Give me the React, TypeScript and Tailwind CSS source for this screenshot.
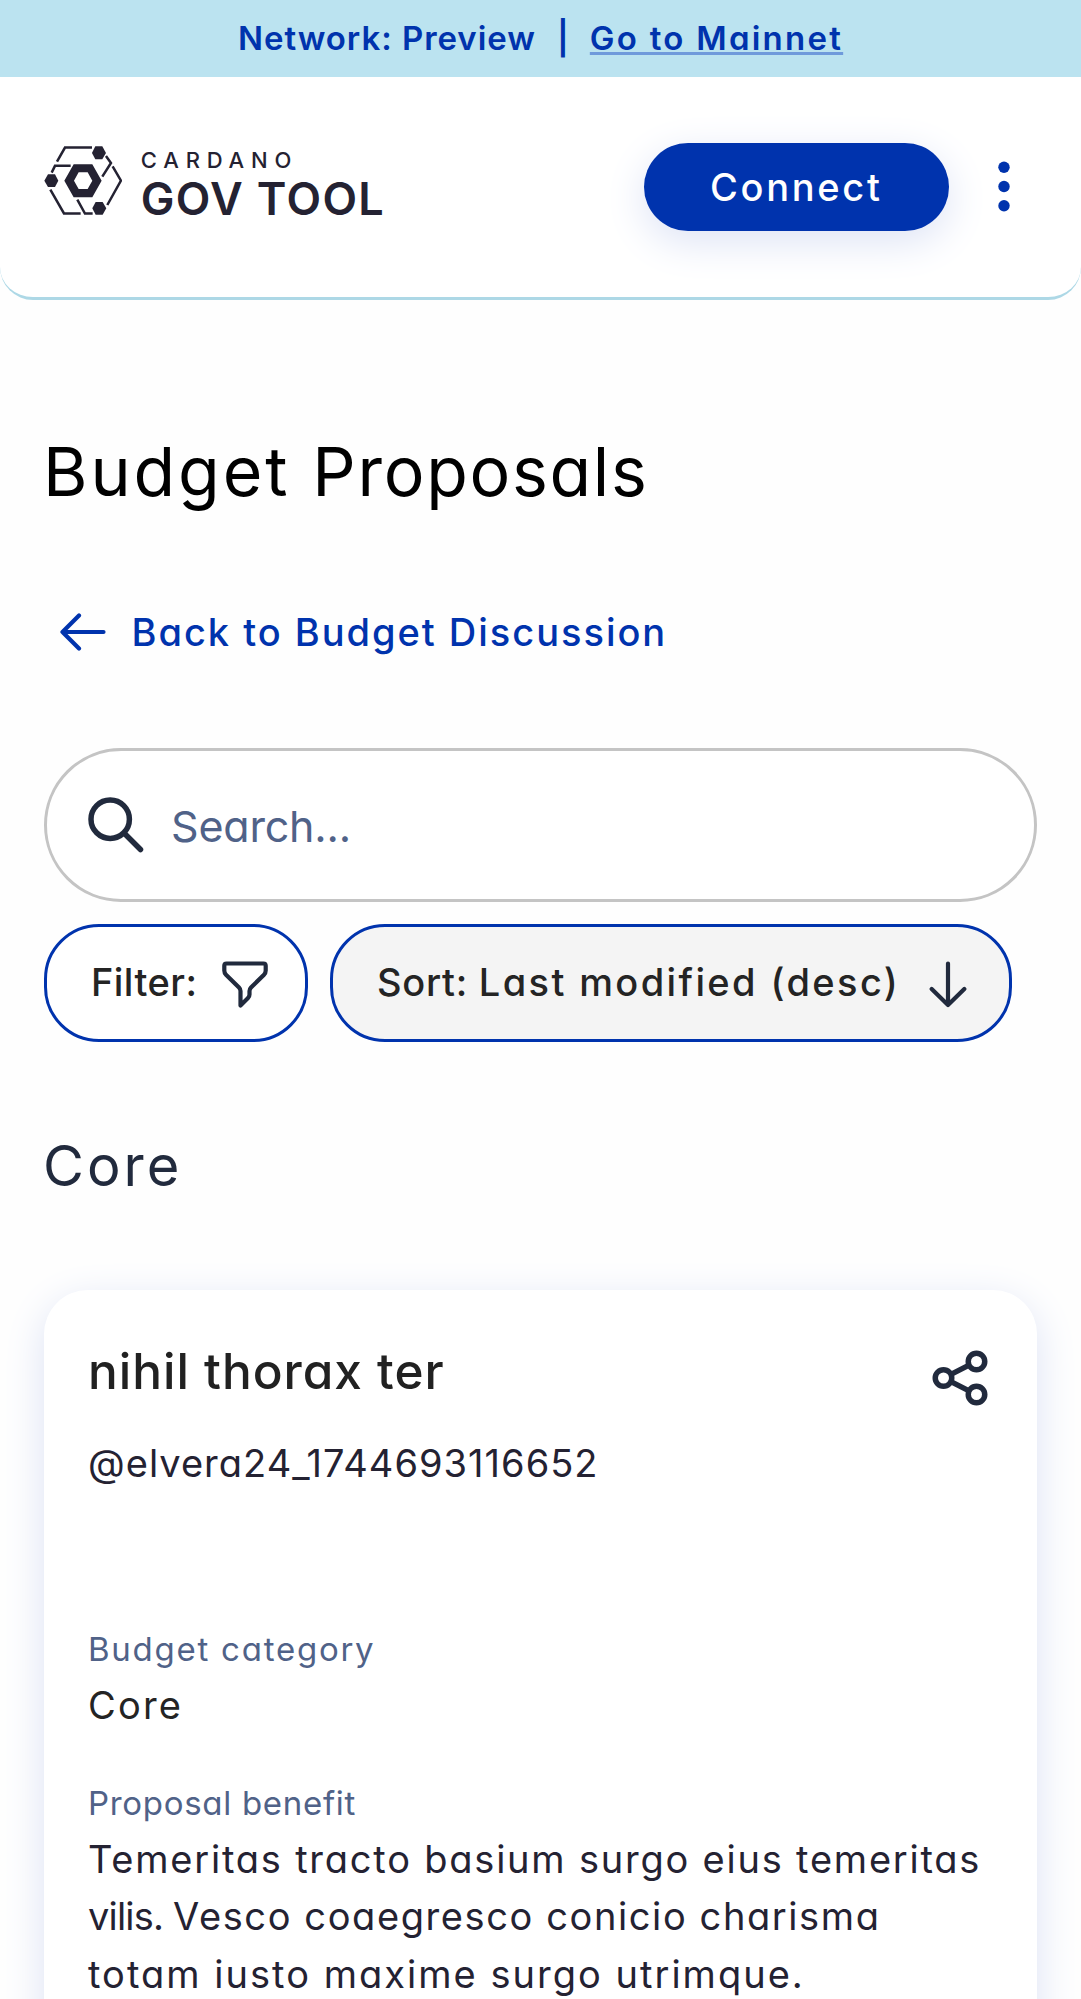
import type { ReactNode } from 'react';

function GovToolMark() {
  return (
    <svg className="h-[69px] w-[78.3px] shrink-0" viewBox="12 16 235 207" fill="none" stroke="#242232" strokeWidth="7.5">
      <path d="M51 63 75 20.5H156" />
      <path d="M35 96 45 75.5H92" />
      <path d="M198 46 213 67 187 108" />
      <path d="M218 77 243 120 202 193" />
      <path d="M31 147 72 218.5H122" />
      <path d="M112 177 135 218.5H158" />
      <g fill="#242232" stroke="none">
        <path d="M156 37 166 17H187L198 37 187 56H166Z" />
        <path d="M13 120 24 101H45L55 120 45 139H24Z" />
        <path d="M157 203 167 184H188L199 203 188 222H167Z" />
        <path fillRule="evenodd" d="M73 120.5 101 71H157L185 120.5 157 169.5H101ZM102 120.5 116 145H143L157 120.5 143 95H116Z" />
      </g>
    </svg>
  );
}

function Field({ label, labelClass, children }: { label: string; labelClass: string; children: ReactNode }) {
  return (
    <div>
      <div className={`text-[33px] leading-[50px] text-[#506288] ${labelClass}`}>{label}</div>
      {children}
    </div>
  );
}

export default function App() {
  return (
    <div className="flex h-[1999px] w-[1081px] flex-col overflow-hidden bg-[#fefefe] font-['Inter',sans-serif] whitespace-nowrap [font-feature-settings:'cv11']">
      <div className="flex h-[77px] shrink-0 bg-[#bbe3f0] pl-[238px] text-[33px] leading-[76px] font-semibold text-[#0033ad]">
        <span className="tracking-[0.95px]">Network: Preview</span>
        <span className="ml-[17px] w-5 text-center">|</span>
        <a className="ml-[17px] tracking-[2.25px] underline decoration-[#6f9adb] decoration-[3px] underline-offset-[2px]">Go to Mainnet</a>
      </div>

      <header className="flex h-[222.5px] shrink-0 items-center justify-between rounded-b-[33px] border-b-[3px] border-[#add8e6] bg-white pr-[71.3px] pl-11">
        <div className="mb-[13px] flex h-[69px] items-start gap-[18.5px] text-[#242232]">
          <GovToolMark />
          <div>
            <div className="text-[22px] leading-[28.4px] font-medium tracking-[6.8px]">CARDANO</div>
            <div className="text-[45px] leading-[49px] font-semibold tracking-[1.35px]">GOV TOOL</div>
          </div>
        </div>
        <div className="flex items-center gap-[48.7px]">
          <button className="h-[88px] w-[305.5px] rounded-full bg-[#0033ad] pt-0.5 text-[38px] font-medium tracking-[2.7px] text-white shadow-[0_11px_41px_#dde3f5]">
            Connect
          </button>
          <svg className="h-[51px] w-3" viewBox="0 0 12 51" fill="#0033ad">
            <circle cx="6" cy="6.2" r="5.7" />
            <circle cx="6" cy="25.5" r="5.7" />
            <circle cx="6" cy="44.8" r="5.7" />
          </svg>
        </div>
      </header>

      <main className="px-11">
        <h1 className="-ml-px mt-[131.5px] text-[68px] leading-[80px] text-black">
          <span className="tracking-[2.9px]">{'Budget '}</span>
          <span className="tracking-[1.7px]">Proposals</span>
        </h1>

        <a className="mt-[92.8px] flex h-14 items-center gap-[26px] pl-[15.5px] text-[38px] font-medium tracking-[1.98px] text-[#0033ad]">
          <svg className="h-[38px] w-[46px]" viewBox="0 0 46 38" fill="none" stroke="#0033ad" strokeWidth="4.2" strokeLinecap="round" strokeLinejoin="round">
            <path d="M43.5 19H2.5M19 2.5 2.5 19 19 35.5" />
          </svg>
          <span className="pt-px">Back to Budget Discussion</span>
        </a>

        <div className="mt-[87.8px] flex h-[154px] items-center gap-[27px] rounded-full border-[3px] border-[#c4c4c4] bg-white pl-[41px] text-[43px]">
          <svg className="size-14" viewBox="0 0 56 56" fill="none" stroke="#212a3d" strokeWidth="5.5" strokeLinecap="round">
            <circle cx="22.2" cy="22.2" r="19.2" />
            <path d="M37 37 52.5 52.5" />
          </svg>
          <span className="pt-[3px] tracking-[-0.2px] text-[#506288]">Search...</span>
        </div>

        <div className="mt-[22px] flex gap-[22px] text-[38px] font-medium text-[#242424]">
          <button className="flex h-[118px] w-[264px] items-center gap-[25px] rounded-[55px] border-[3px] border-[#0033ad] bg-white pl-[44px] tracking-[0.45px]">
            Filter:
            <svg className="mt-[3px] h-[47px] w-[46px] shrink-0" viewBox="0 0 46 47" fill="none" stroke="#212a3d" strokeWidth="4.2" strokeLinejoin="round">
              <path d="M4.5 2.5H41.5Q43.7 2.5 43.7 4.7V9.5Q43.7 12 42 13.7L29 26.5Q27.5 28 27.5 30V33.5Q27.5 35.5 26 37L18.5 44.5V30Q18.5 28 17 26.5L4 13.7Q2.3 12 2.3 9.5V4.7Q2.3 2.5 4.5 2.5Z" />
            </svg>
          </button>
          <button className="flex h-[118px] w-[682px] items-center gap-[29px] rounded-[55px] border-[3px] border-[#0033ad] bg-[#f4f4f4] pl-[44px]">
            <span className="whitespace-pre">
              <span className="tracking-[0.73px]">{'Sort: '}</span>
              <span className="tracking-[2.38px]">Last modified (desc)</span>
            </span>
            <svg className="mt-[3px] h-[47px] w-[38px] shrink-0" viewBox="0 0 38 47" fill="none" stroke="#212a3d" strokeWidth="4.2" strokeLinecap="round" strokeLinejoin="round">
              <path d="M19 2.5V43.5M2.7 28 19 44 35.3 28" />
            </svg>
          </button>
        </div>

        <h2 className="-ml-px mt-[92.2px] text-[56px] leading-[64px] tracking-[3px] text-[#212a3d]">Core</h2>

        <article className="mt-[91.8px] h-[900px] rounded-[44px] bg-white px-11 pt-[51px] text-[38px] leading-[57.6px] text-[#242232] shadow-[0_11px_41px_#dde3f5]">
          <div className="flex justify-between">
            <div>
              <h3 className="text-[49.5px] leading-[60px] font-medium tracking-[0.98px] text-[#212121]">nihil thorax ter</h3>
              <p className="mt-[34px] leading-14 tracking-[1.02px]">@elvera24_1744693116652</p>
            </div>
            <svg className="mt-1 size-[66px]" viewBox="0 0 24 24" fill="none" stroke="#212a3d" strokeWidth="2">
              <circle cx="6" cy="12" r="3" />
              <circle cx="18" cy="6" r="3" />
              <circle cx="18" cy="18" r="3" />
              <path d="M8.7 10.7 15.3 7.3M8.7 13.3 15.3 16.7" />
            </svg>
          </div>

          <div className="mt-[133px] flex flex-col gap-[43.5px]">
            <Field label="Budget category" labelClass="tracking-[1.75px]">
              <p className="mt-[3px] tracking-[2.2px] text-[#242424]">Core</p>
            </Field>
            <Field label="Proposal benefit" labelClass="tracking-[0.7px]">
              <p className="mt-[3px]">
                <span className="tracking-[1.78px]">Temeritas tracto basium surgo eius temeritas</span>
                <br />
                <span className="tracking-[-0.8px]">{'vilis. '}</span>
                <span className="tracking-[1.6px]">Vesco coaegresco conicio charisma</span>
                <br />
                <span className="tracking-[2.02px]">totam iusto maxime surgo utrimque.</span>
              </p>
            </Field>
          </div>
        </article>
      </main>
    </div>
  );
}
